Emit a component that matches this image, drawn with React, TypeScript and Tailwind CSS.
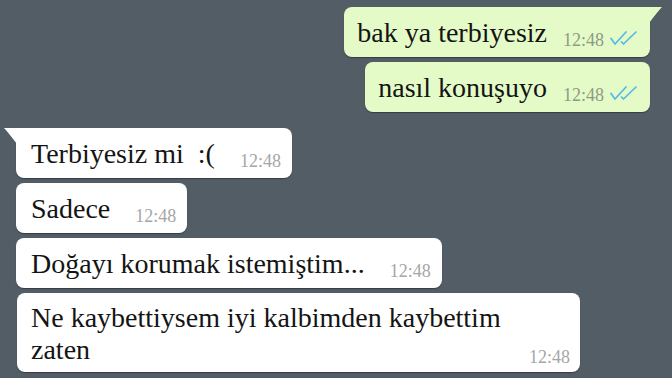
const Checks = () => (
  <svg width="28" height="15" viewBox="0 0 28 15" fill="none" className="mb-[3px]">
    <path d="M1 7.5 L5 13 L16 1" stroke="#55b9e6" strokeWidth="1.7" strokeLinecap="round" strokeLinejoin="round" />
    <path d="M11.5 11 L13.5 13 L26 1" stroke="#55b9e6" strokeWidth="1.7" strokeLinecap="round" strokeLinejoin="round" />
  </svg>
);

const Sent = ({ text, tail }: { text: string; tail?: boolean }) => (
  <div
    className={`relative flex items-end gap-[16px] self-end mr-[22px] h-[50px] pl-[13px] pr-[12px] pt-[9px] pb-[8px] bg-[#e4fbc8] rounded-lg shadow-[0_1px_1px_rgba(0,0,0,0.35)] ${tail ? "rounded-tr-none" : ""}`}
  >
    {tail && (
      <svg className="absolute top-0 -right-[12px]" width="13" height="16" viewBox="0 0 13 16">
        <path d="M0 0 L13 0 Q10 3 0 16 Z" fill="#e4fbc8" />
      </svg>
    )}
    <span className="text-[28px] leading-[33px] text-[#141414] whitespace-nowrap">{text}</span>
    <span className="flex items-end gap-[6px]">
      <span className="text-[18px] leading-[17px] text-[#8f9a86]">12:48</span>
      <Checks />
    </span>
  </div>
);

const Received = ({ text, tail }: { text: string; tail?: boolean }) => (
  <div
    className={`relative flex items-end gap-[25px] self-start ml-[16px] h-[50px] pl-[15px] pr-[11px] pt-[9px] pb-[8px] bg-white rounded-lg shadow-[0_1px_1px_rgba(0,0,0,0.35)] ${tail ? "rounded-tl-none" : ""}`}
  >
    {tail && (
      <svg className="absolute top-0 -left-[12px]" width="13" height="16" viewBox="0 0 13 16">
        <path d="M13 0 L0 0 Q3 3 13 16 Z" fill="#ffffff" />
      </svg>
    )}
    <span className="text-[28px] leading-[33px] text-[#141414] whitespace-pre">{text}</span>
    <span className="text-[18px] leading-[17px] text-[#a6a6a6]">12:48</span>
  </div>
);

export default function App() {
  return (
    <div className="w-[672px] h-[378px] overflow-hidden bg-[#535d66] flex flex-col pt-[7px] font-['Liberation_Serif','DejaVu_Serif',serif]">
      <div className="flex flex-col gap-[5px]">
        <Sent text="bak ya terbiyesiz" tail />
        <Sent text="nasıl konuşuyo" />
      </div>

      <div className="flex flex-col gap-[5px] mt-[16px]">
        <Received text="Terbiyesiz mi  :(" tail />
        <Received text="Sadece" />
        <Received text="Doğayı korumak istemiştim..." />
        <div className="flex items-end justify-between ml-[17px] w-[563px] h-[79px] pl-[14px] pr-[10px] pt-[9px] pb-[6px] bg-white rounded-lg shadow-[0_1px_1px_rgba(0,0,0,0.35)]">
          <span className="text-[28px] leading-[32px] text-[#141414] whitespace-nowrap">
            Ne kaybettiysem iyi kalbimden kaybettim
            <br />
            zaten
          </span>
          <span className="text-[18px] leading-[17px] text-[#a6a6a6]">12:48</span>
        </div>
      </div>
    </div>
  );
}
